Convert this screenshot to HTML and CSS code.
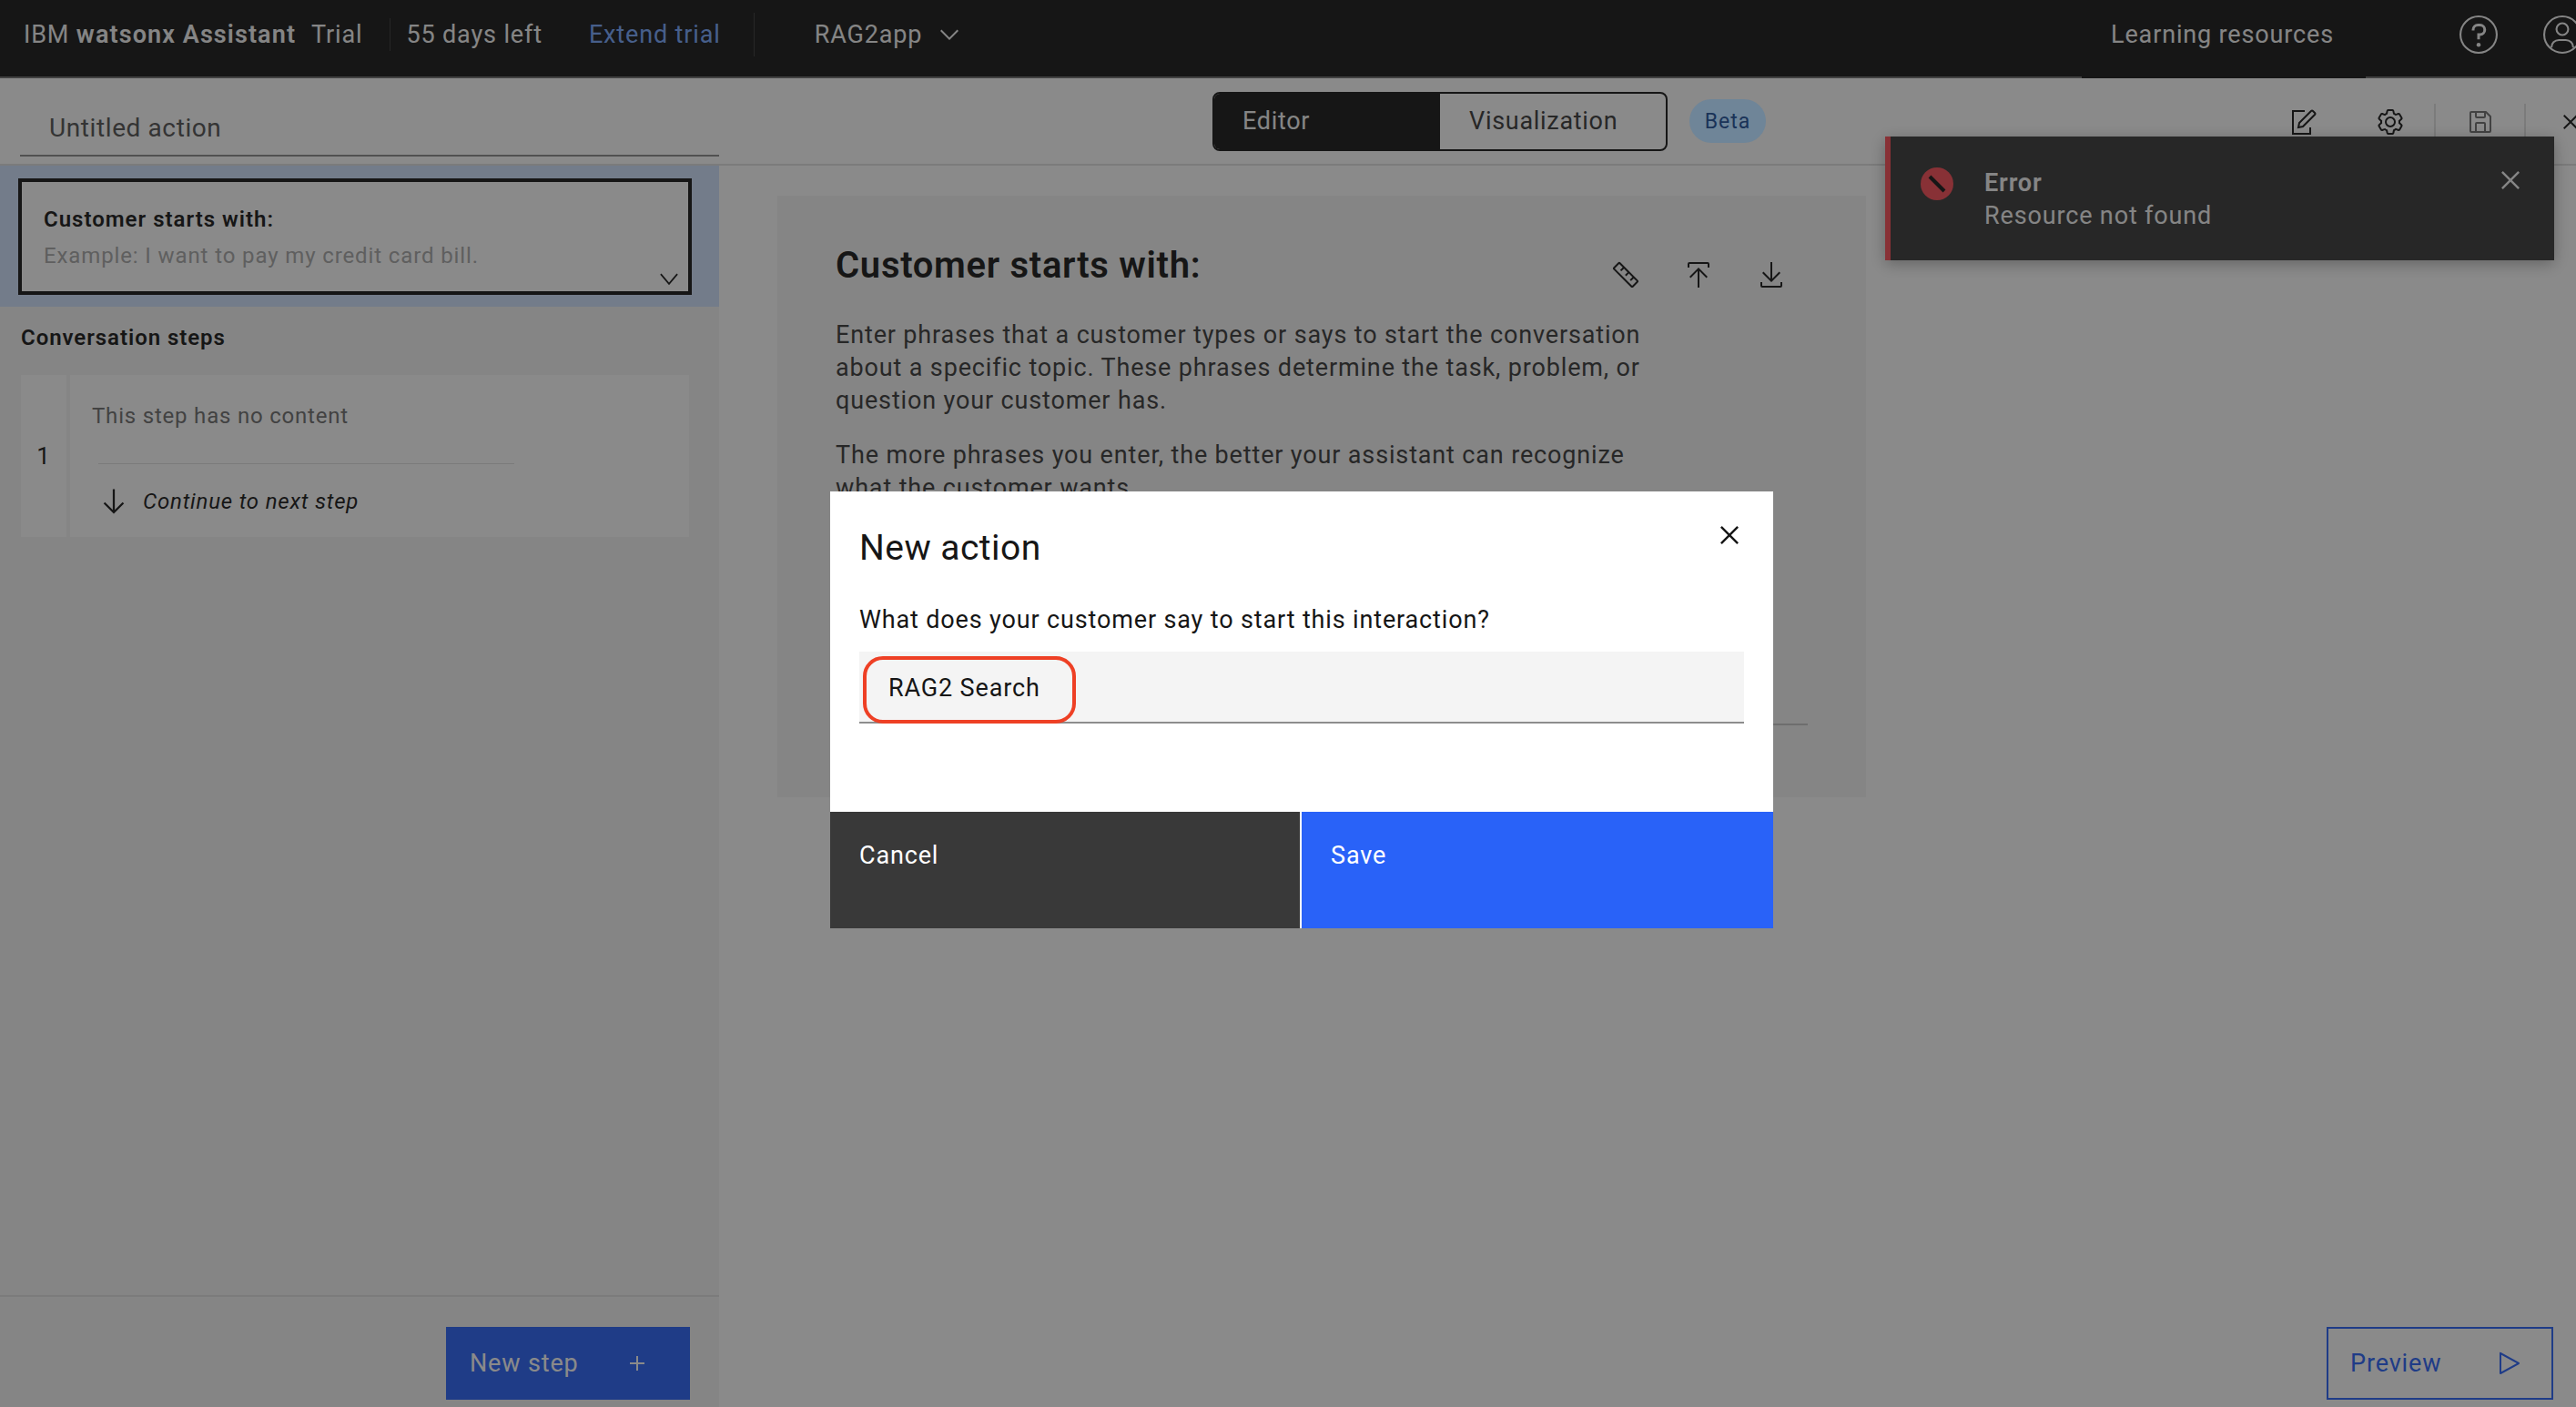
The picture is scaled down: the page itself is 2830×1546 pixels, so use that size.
FILE: index.html
```html
<!DOCTYPE html>
<html lang="en">
<head>
    <meta charset="UTF-8">
    <meta name="viewport" content="width=device-width, initial-scale=1.0">
    <title>IBM watsonx Assistant</title>
    <link rel="stylesheet" href="styles.css">
</head>
<body>
    <header class="topbar">
        <span class="brand">IBM <b>watsonx Assistant</b></span>
        <span class="trial">Trial</span>
        <span class="top-sep"></span>
        <span class="days">55 days left</span>
        <a class="extend">Extend trial</a>
        <span class="top-sep tall"></span>
        <span class="app-name">RAG2app</span>
        <svg class="app-chevron" viewBox="0 0 32 32"><path d="M16 22L6 12l1.4-1.4 8.6 8.6 8.6-8.6L26 12z"/></svg>
        <span class="learning">Learning resources</span>
        <svg class="top-icon help" viewBox="0 0 32 32"><path d="M16 2a14 14 0 1 0 14 14A14 14 0 0 0 16 2zm0 26.6a12.6 12.6 0 1 1 12.6-12.6A12.6 12.6 0 0 1 16 28.6z"/><circle cx="16" cy="23.5" r="1.5"/><path d="M17 8h-1.5a4.49 4.49 0 0 0-4.5 4.5v.5h2v-.5a2.5 2.5 0 0 1 2.5-2.5H17a2.5 2.5 0 0 1 0 5h-2v4.5h2V17a4.5 4.5 0 0 0 0-9z"/></svg>
        <svg class="top-icon user" viewBox="0 0 32 32"><g fill="none"><circle cx="16" cy="16" r="13.3"/><circle cx="16" cy="12" r="4.3"/><path d="M8 25.5c0-3.2 2.4-5.5 5.5-5.5h5c3.1 0 5.5 2.3 5.5 5.5"/></g></svg>
    </header>

    <div class="workspace">
        <aside class="left-panel">
            <div class="title-row">
                <div class="title-field">Untitled action</div>
            </div>
            <div class="start-row">
                <div class="start-box">
                    <div class="start-title">Customer starts with:</div>
                    <div class="start-hint">Example: I want to pay my credit card bill.</div>
                    <svg class="start-chevron" viewBox="0 0 32 32"><path d="M16 26L4 12l1.6-1.4L16 22.8l10.4-12.2L28 12z"/></svg>
                </div>
            </div>
            <div class="steps">
                <h3 class="steps-title">Conversation steps</h3>
                <div class="step-card">
                    <div class="step-num">1</div>
                    <div class="step-body">
                        <div class="step-empty">This step has no content</div>
                        <div class="step-line"></div>
                        <div class="step-next">
                            <svg class="next-arrow" viewBox="0 0 32 32"><path d="M24.59 16.59L17 24.17V4h-2v20.17l-7.59-7.58L6 18l10 10 10-10-1.41-1.41z"/></svg>
                            <em>Continue to next step</em>
                        </div>
                    </div>
                </div>
            </div>
            <div class="left-footer">
                <button class="new-step">New step
                    <svg class="btn-icon" viewBox="0 0 32 32"><path d="M17 15V8h-2v7H8v2h7v7h2v-7h7v-2z"/></svg>
                </button>
            </div>
        </aside>

        <main class="editor">
            <div class="toolbar">
                <div class="switcher">
                    <span class="switch-item active">Editor</span>
                    <span class="switch-item">Visualization</span>
                </div>
                <span class="beta">Beta</span>
                <div class="tools">
                    <svg class="tool" viewBox="0 0 32 32"><path class="line" d="M17 4H4v25h19v-7"/><path class="line" d="M10 22l1-5L24 4q1-1 2 0l2 2q1 1 0 2L15 21z"/></svg>
                    <svg class="tool" viewBox="0 0 32 32"><path d="M27 16.76c0-.25 0-.5 0-.76s0-.51 0-.77l1.92-1.68A2 2 0 0 0 29.3 11L26.94 7a2 2 0 0 0-1.73-1 2 2 0 0 0-.64.1l-2.43.82a11.35 11.35 0 0 0-1.31-.75l-.51-2.52a2 2 0 0 0-2-1.61h-4.68a2 2 0 0 0-2 1.61l-.51 2.52a11.48 11.48 0 0 0-1.32.75l-2.38-.86A2 2 0 0 0 6.79 6a2 2 0 0 0-1.73 1L2.7 11a2 2 0 0 0 .41 2.51L5 15.24c0 .25 0 .5 0 .76s0 .51 0 .77l-1.92 1.68A2 2 0 0 0 2.7 21l2.36 4a2 2 0 0 0 1.73 1 2 2 0 0 0 .64-.1l2.43-.82a11.35 11.35 0 0 0 1.31.75l.51 2.52a2 2 0 0 0 2 1.61h4.72a2 2 0 0 0 2-1.61l.51-2.52a11.48 11.48 0 0 0 1.32-.75l2.42.82a2 2 0 0 0 .64.1 2 2 0 0 0 1.73-1l2.28-4a2 2 0 0 0-.41-2.51zM25.21 24l-3.43-1.16a8.86 8.86 0 0 1-2.71 1.57L18.36 28h-4.72l-.71-3.55a9.36 9.36 0 0 1-2.7-1.57L6.79 24l-2.36-4 2.72-2.4a8.9 8.9 0 0 1 0-3.13L4.43 12l2.36-4 3.43 1.16a8.86 8.86 0 0 1 2.71-1.57L13.64 4h4.72l.71 3.55a9.36 9.36 0 0 1 2.7 1.57L25.21 8l2.36 4-2.72 2.4a8.9 8.9 0 0 1 0 3.13L27.57 20z"/><path d="M16 22a6 6 0 1 1 6-6 5.94 5.94 0 0 1-6 6zm0-10a3.91 3.91 0 0 0-4 4 3.91 3.91 0 0 0 4 4 3.91 3.91 0 0 0 4-4 3.91 3.91 0 0 0-4-4z"/></svg>
                    <span class="tool-sep"></span>
                    <svg class="tool muted" viewBox="0 0 32 32"><path d="M27.71 9.29l-5-5A1 1 0 0 0 22 4H6a2 2 0 0 0-2 2v20a2 2 0 0 0 2 2h20a2 2 0 0 0 2-2V10a1 1 0 0 0-.29-.71zM12 6h8v4h-8zm8 20h-8v-8h8zm2 0v-8a2 2 0 0 0-2-2h-8a2 2 0 0 0-2 2v8H6V6h4v4a2 2 0 0 0 2 2h8a2 2 0 0 0 2-2V6.41l4 4V26z"/></svg>
                    <span class="tool-sep"></span>
                    <svg class="tool" viewBox="0 0 32 32"><path d="M24 9.4L22.6 8 16 14.6 9.4 8 8 9.4 14.6 16 8 22.6 9.4 24 16 17.4 22.6 24 24 22.6 17.4 16 24 9.4z"/></svg>
                </div>
            </div>

            <section class="intro-card">
                <div class="intro-head">
                    <h2>Customer starts with:</h2>
                    <div class="intro-icons">
                        <svg class="tool" viewBox="0 0 32 32"><path d="M29.41 21.67L10.34 2.58a2 2 0 0 0-2.83 0L2.59 7.51a2 2 0 0 0 0 2.82L21.66 29.42a2 2 0 0 0 1.42.58 2 2 0 0 0 1.41-.58l4.92-4.93a2 2 0 0 0 0-2.82zM23.08 28L4 8.92 8.92 4l3.79 3.79-2.92 2.92 1.41 1.41 2.92-2.92 3.93 3.93-2.92 2.92 1.42 1.42 2.92-2.92 3.92 3.92-2.92 2.92 1.42 1.42 2.92-2.92L28 23.08z"/></svg>
                        <svg class="tool" viewBox="0 0 32 32"><path d="M6 18L7.41 19.41 15 11.83 15 30 17 30 17 11.83 24.59 19.41 26 18 16 8 6 18z"/><path d="M6 8V4H26V8H28V4a2 2 0 0 0-2-2H6A2 2 0 0 0 4 4V8Z"/></svg>
                        <svg class="tool" viewBox="0 0 32 32"><path d="M26 24v4H6V24H4v4a2 2 0 0 0 2 2H26a2 2 0 0 0 2-2V24z"/><path d="M26 14L24.59 12.59 17 20.17 17 2 15 2 15 20.17 7.41 12.59 6 14 16 24 26 14z"/></svg>
                    </div>
                </div>
                <p>Enter phrases that a customer types or says to start the conversation<br>about a specific topic. These phrases determine the task, problem, or<br>question your customer has.</p>
                <p>The more phrases you enter, the better your assistant can recognize<br>what the customer wants.</p>
                <div class="intro-line"></div>
            </section>

            <button class="preview">Preview
                <svg class="btn-icon" viewBox="0 0 32 32"><path d="M7 28a1 1 0 0 1-1-1V5a1 1 0 0 1 1.482-.876l20 11a1 1 0 0 1 0 1.752l-20 11A1.001 1.001 0 0 1 7 28zM8 6.69v18.62L24.925 16z"/></svg>
            </button>
        </main>
    </div>

    <div class="toast">
        <svg class="toast-icon" viewBox="0 0 36 36"><circle cx="18" cy="18" r="18" fill="#fa4d56"/><path d="M10 10l16 16" stroke="#161616" stroke-width="4"/></svg>
        <div class="toast-text">
            <div class="toast-title">Error</div>
            <div class="toast-msg">Resource not found</div>
        </div>
        <svg class="toast-close" viewBox="0 0 32 32"><path d="M24 9.4L22.6 8 16 14.6 9.4 8 8 9.4 14.6 16 8 22.6 9.4 24 16 17.4 22.6 24 24 22.6 17.4 16 24 9.4z"/></svg>
    </div>

    <div class="overlay"></div>

    <div class="modal">
        <div class="modal-body">
            <div class="modal-head">
                <h2>New action</h2>
                <svg class="modal-close" viewBox="0 0 32 32"><path d="M24 9.4L22.6 8 16 14.6 9.4 8 8 9.4 14.6 16 8 22.6 9.4 24 16 17.4 22.6 24 24 22.6 17.4 16 24 9.4z"/></svg>
            </div>
            <label class="modal-label">What does your customer say to start this interaction?</label>
            <div class="modal-input">
                <span class="callout">RAG2 Search</span>
            </div>
        </div>
        <div class="modal-actions">
            <button class="btn-cancel">Cancel</button>
            <button class="btn-save">Save</button>
        </div>
    </div>
</body>
</html>
```

FILE: styles.css
```css
* {
    box-sizing: border-box;
}
html, body {
    height: 100%;
}
body {
    margin: 0;
    overflow: hidden;
    display: flex;
    flex-direction: column;
    background: #fff;
    color: #161616;
    font-family: Roboto, "Liberation Sans", sans-serif;
    font-size: 27px;
    letter-spacing: 0.85px;
}
h2, h3, p {
    margin: 0;
    font-weight: inherit;
}
button {
    font: inherit;
    letter-spacing: inherit;
    border: none;
    cursor: pointer;
}
svg {
    display: block;
    flex: none;
    fill: currentColor;
    stroke: currentColor;
    stroke-width: 0;
}

/* top bar */
.topbar {
    flex: none;
    height: 86px;
    display: flex;
    align-items: center;
    padding: 0 0 9px 26px;
    background: #161616;
    border-bottom: 2px solid #6f6f6f;
    color: #f4f4f4;
    white-space: nowrap;
}
.brand b {
    font-weight: 600;
    letter-spacing: 1.1px;
}
.trial {
    margin-left: 17px;
}
.top-sep {
    width: 1px;
    height: 36px;
    margin: 0 17px 0 30px;
    background: #393939;
}
.top-sep.tall {
    height: 48px;
    margin: 0 66px 0 36px;
}
.extend {
    margin-left: 51px;
    color: #78a9ff;
}
.app-chevron {
    width: 32px;
    height: 32px;
    margin-left: 14px;
}
.learning {
    position: relative;
    margin-left: auto;
    line-height: 36px;
}
.learning::after {
    content: "";
    position: absolute;
    left: -32px;
    right: -35px;
    bottom: -30px;
    height: 2px;
    background: #161616;
}
.top-icon {
    width: 48px;
    height: 48px;
}
.top-icon.help {
    margin-left: 135px;
}
.top-icon.user {
    margin-left: 44px;
    margin-right: -9px;
}
.top-icon.user g {
    stroke-width: 1.4;
}

/* left column */
.workspace {
    flex: 1;
    display: flex;
    min-height: 0;
}
.left-panel {
    width: 790px;
    flex: none;
    display: flex;
    flex-direction: column;
    background: #f4f4f4;
}
.title-row {
    height: 94px;
    padding: 0 0 8px 22px;
    background: #fff;
}
.title-field {
    height: 86px;
    padding: 35px 0 0 32px;
    line-height: 40px;
    font-size: 28px;
    letter-spacing: 0.6px;
    color: #525252;
    border-bottom: 2px solid #8d8d8d;
}
.start-row {
    height: 157px;
    padding: 14px 30px 0 20px;
    background: #d0e2ff;
    border-top: 2px solid #e0e0e0;
}
.start-box {
    position: relative;
    height: 128px;
    padding: 25px 0 0 24px;
    background: #fff;
    border: 4px solid #161616;
}
.start-title {
    line-height: 32px;
    font-size: 24px;
    font-weight: 600;
    letter-spacing: 1px;
}
.start-hint {
    margin-top: 8px;
    line-height: 32px;
    font-size: 24px;
    letter-spacing: 0.88px;
    color: #a8a8a8;
}
.start-chevron {
    position: absolute;
    right: 8px;
    bottom: 2px;
    width: 26px;
    height: 26px;
}
.steps {
    flex: 1;
    padding: 0 33px 0 23px;
    border-bottom: 2px solid #e0e0e0;
}
.steps-title {
    margin-top: 18px;
    line-height: 32px;
    font-size: 24px;
    font-weight: 600;
    letter-spacing: 0.95px;
}
.step-card {
    margin-top: 25px;
    height: 178px;
    display: flex;
    gap: 4px;
    font-size: 24px;
    letter-spacing: 0.8px;
}
.step-num {
    width: 50px;
    display: flex;
    align-items: center;
    justify-content: center;
    background: #fff;
    font-size: 26px;
}
.step-body {
    flex: 1;
    padding: 29px 0 0 24px;
    background: #fff;
}
.step-empty {
    line-height: 32px;
    color: #6f6f6f;
}
.step-line {
    width: 457px;
    height: 1px;
    margin: 36px 0 0 7px;
    background: #e0e0e0;
}
.step-next {
    display: flex;
    align-items: center;
    gap: 14px;
    margin-top: 23px;
    padding-left: 6px;
}
.next-arrow {
    width: 36px;
    height: 36px;
}
.left-footer {
    flex: none;
    height: 121px;
    padding: 33px 32px 0 0;
    display: flex;
    justify-content: flex-end;
    align-items: flex-start;
}
.new-step {
    width: 268px;
    height: 80px;
    padding: 0 42px 0 26px;
    display: flex;
    align-items: center;
    justify-content: space-between;
    background: #2962f8;
    color: #fff;
}
.btn-icon {
    width: 32px;
    height: 32px;
}

/* editor */
.editor {
    position: relative;
    flex: 1;
    background: #fff;
}
.toolbar {
    height: 96px;
    display: flex;
    align-items: center;
    padding-left: 542px;
    border-bottom: 2px solid #e0e0e0;
}
.switcher {
    width: 500px;
    height: 65px;
    display: flex;
    border: 2px solid #161616;
    border-radius: 8px;
    overflow: hidden;
}
.switch-item {
    padding: 0 0 0 32px;
    display: flex;
    align-items: center;
    color: #393939;
    letter-spacing: 0.7px;
}
.switch-item.active {
    width: 248px;
    padding-left: 31px;
    background: #161616;
    color: #f4f4f4;
}
/* this blue is lighter than the dim layer allows, so it sits above it */
.beta {
    position: relative;
    z-index: 1;
    width: 84px;
    height: 48px;
    margin-left: 24px;
    display: flex;
    align-items: center;
    justify-content: center;
    border-radius: 24px;
    background: #6f8598;
    color: #1a3358;
    font-size: 23px;
    letter-spacing: 1px;
}
.tools {
    margin-left: auto;
    margin-right: -10px;
    padding-top: 2px;
    display: flex;
    align-items: center;
}
.tool {
    width: 32px;
    height: 32px;
}
.tool .line {
    fill: none;
    stroke-width: 2;
}
.tool.muted {
    color: #6f6f6f;
}
.tools .tool:nth-of-type(2) {
    margin-left: 63px;
}
.tool-sep {
    width: 2px;
    height: 40px;
    background: #e0e0e0;
    margin: 0 33px 0 32px;
}
.intro-card {
    width: 1196px;
    height: 661px;
    margin: 33px 0 0 64px;
    padding: 51px 0 0 64px;
    background: #f4f4f4;
    color: #393939;
    overflow: hidden;
}
.intro-head {
    display: flex;
    justify-content: space-between;
}
.intro-head h2 {
    line-height: 52px;
    font-size: 40px;
    font-weight: 600;
    letter-spacing: 0.7px;
    color: #161616;
}
.intro-icons {
    display: flex;
    gap: 48px;
    margin: 20px 88px 0 0;
    color: #161616;
}
.intro-card p {
    line-height: 36px;
    margin-bottom: 24px;
}
.intro-head + p {
    margin-top: 32px;
}
.intro-line {
    height: 2px;
    width: 1068px;
    margin-top: 241px;
    background: #c6c6c6;
}
.preview {
    position: absolute;
    right: 25px;
    bottom: 8px;
    width: 249px;
    height: 80px;
    padding: 0 31px 0 24px;
    display: flex;
    align-items: center;
    justify-content: space-between;
    background: transparent;
    border: 2px solid #2962f8;
    color: #2962f8;
}

/* toast, sits under the dim layer */
.toast {
    position: absolute;
    left: 2071px;
    top: 150px;
    width: 735px;
    height: 136px;
    padding: 34px 0 0 33px;
    display: flex;
    background: #393939;
    border-left: 6px solid #fa4d56;
    box-shadow: 0 4px 16px rgba(0, 0, 0, 0.3);
    color: #f4f4f4;
}
.toast-icon {
    width: 36px;
    height: 36px;
}
.toast-text {
    margin-left: 34px;
    margin-top: -1px;
}
.toast-title {
    line-height: 36px;
    font-weight: 600;
}
.toast-msg {
    line-height: 36px;
}
.toast-close {
    position: absolute;
    right: 28px;
    top: 28px;
    width: 40px;
    height: 40px;
}

.overlay {
    position: fixed;
    inset: 0;
    background: rgba(22, 22, 22, 0.5);
}

/* modal */
.modal {
    position: absolute;
    left: 912px;
    top: 540px;
    width: 1036px;
    height: 480px;
    display: flex;
    flex-direction: column;
    background: #fff;
}
.modal-body {
    flex: 1;
    padding: 0 32px;
}
.modal-head {
    display: flex;
    justify-content: space-between;
    padding-top: 38px;
}
.modal-head h2 {
    line-height: 48px;
    font-size: 39px;
    letter-spacing: 0.45px;
}
.modal-close {
    width: 40px;
    height: 40px;
    margin: -10px -4px -10px 0;
}
.modal-label {
    display: block;
    margin-top: 37px;
    line-height: 36px;
}
.modal-input {
    height: 79px;
    margin-top: 17px;
    padding: 5px 0 0 4px;
    background: #f4f4f4;
    border-bottom: 2px solid #8d8d8d;
}
.callout {
    display: block;
    width: 234px;
    height: 74px;
    padding-left: 24px;
    line-height: 62px;
    border: 4px solid #ee4025;
    border-radius: 22px;
}
.modal-actions {
    flex: none;
    height: 128px;
    display: flex;
    gap: 2px;
}
.modal-actions button {
    padding: 30px 32px 62px;
    text-align: left;
    line-height: 36px;
    color: #fff;
}
.btn-cancel {
    flex: 0 0 516px;
    background: #393939;
}
.btn-save {
    flex: 1;
    background: #2962f8;
}
```
